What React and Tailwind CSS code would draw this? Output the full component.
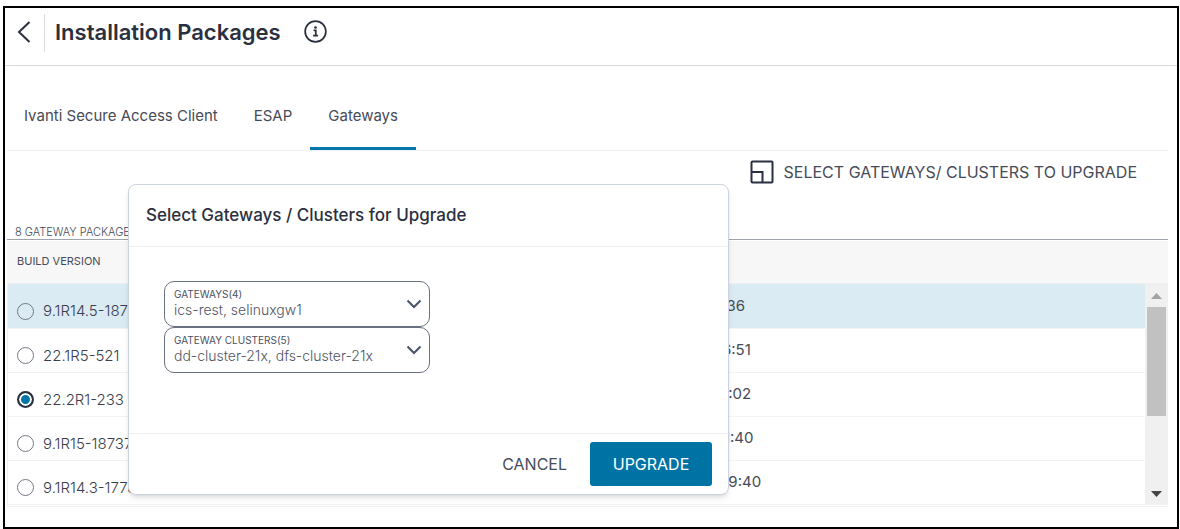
import { useState } from "react";

const tabs = ["Ivanti Secure Access Client", "ESAP", "Gateways"];

const packages = [
  { version: "9.1R14.5-18707", released: "11/04/2022, 10:11:36" },
  { version: "22.1R5-521", released: "09/06/2022, 11:26:51" },
  { version: "22.2R1-233", released: "08/11/2022, 21:43:02" },
  { version: "9.1R15-18737", released: "07/21/2022, 09:21:40" },
  { version: "9.1R14.3-17783", released: "06/20/2022, 08:29:40" },
];

const ScrollBar = () => (
  <div className="flex w-[23px] shrink-0 flex-col items-center bg-[#f0f0f0]">
    <svg viewBox="0 0 11 6" className="mt-[9px] h-[6px] w-[11px] shrink-0">
      <path d="M0 6 5.5 0 11 6z" fill="#a3a3a3" />
    </svg>
    <div className="mt-2 h-[109px] w-[19px] bg-[#c1c1c1]" />
    <svg viewBox="0 0 11 6" className="mt-auto mb-2 h-[6px] w-[11px] shrink-0">
      <path d="M0 0h11L5.5 6z" fill="#454545" />
    </svg>
  </div>
);

const SelectField = ({ id, label, value }) => (
  <div className="flex h-[46px] items-center rounded-[10px] border border-[#69707f] pr-[7px] pl-[9px]">
    <div className="flex min-w-0 flex-1 flex-col">
      <label htmlFor={id} className="text-[10px] leading-[12px] text-[#4b5162]">
        {label}
      </label>
      <select
        id={id}
        className="h-[20px] w-full appearance-none bg-transparent text-[14px] leading-[20px] font-light text-[#4f5563] outline-none"
      >
        <option>{value}</option>
      </select>
    </div>
    <svg
      viewBox="0 0 16 10"
      className="h-[10px] w-[16px] shrink-0"
      fill="none"
      stroke="#4a5468"
      strokeWidth="2"
    >
      <path d="M1.5 1.5 8 8l6.5-6.5" />
    </svg>
  </div>
);

const UpgradeDialog = () => (
  <div
    role="dialog"
    aria-labelledby="upgrade-title"
    className="absolute top-[176px] left-[123px] w-[601px] rounded-[8px] border border-[#ccd3e0] bg-white shadow-md"
  >
    <h2
      id="upgrade-title"
      className="border-b border-[#eeeff1] py-[18px] pl-[17px] text-[17px] leading-[25px] font-medium text-[#2b3040]"
    >
      Select Gateways / Clusters for Upgrade
    </h2>
    <div className="h-[186px] pt-[34px] pl-[35px]">
      <div className="w-[266px]">
        <SelectField
          id="gateways"
          label="GATEWAYS(4)"
          value="ics-rest, selinuxgw1"
        />
        <SelectField
          id="clusters"
          label="GATEWAY CLUSTERS(5)"
          value="dd-cluster-21x, dfs-cluster-21x"
        />
      </div>
    </div>
    <div className="flex justify-end gap-[23px] border-t border-[#eeeff1] py-2 pr-4">
      <button className="text-[16px] text-[#474c59]">CANCEL</button>
      <button className="h-[44px] w-[122px] rounded-[3px] bg-[#0073a5] text-[16px] text-white">
        UPGRADE
      </button>
    </div>
  </div>
);

export default function App() {
  const [activeTab, setActiveTab] = useState("Gateways");
  const [selected, setSelected] = useState("22.2R1-233");

  return (
    <div className="min-h-screen bg-white pt-[6px] pr-px pl-[3px] font-['Inter',sans-serif] text-[#474b57]">
      <div className="relative border-2 border-black">
        <header className="flex h-[58px] items-start border-b border-[#d5dbe1]">
          <button aria-label="Back" className="mt-[13px] ml-[12px]">
            <svg
              viewBox="0 0 14 22"
              className="h-[22px] w-[14px]"
              fill="none"
              stroke="#2b3040"
              strokeWidth="2"
            >
              <path d="M12.5 1 2 11l10.500 10" />
            </svg>
          </button>
          <div className="mt-[6px] ml-[13px] h-[38px] w-px bg-[#d9dce1]" />
          <h1 className="mt-[10px] ml-[10px] text-[22px] leading-[28px] font-semibold text-[#2b3040]">
            Installation Packages
          </h1>
          <button aria-label="Information" className="mt-[12px] ml-[23px]">
            <svg viewBox="0 0 24 24" className="h-[23px] w-[23px]" fill="none">
              <circle cx="12" cy="12" r="10.800" stroke="#2b3040" strokeWidth="1.800" />
              <circle cx="12" cy="7.800" r="1.400" fill="#2b3040" />
              <path
                d="M10 10.800h2.300V16M9.500 16.200h5.200"
                stroke="#2b3040"
                strokeWidth="1.800"
              />
            </svg>
          </button>
        </header>

        <div className="pr-[9px] pl-[2px]">
          <nav className="mt-[14px] flex h-[71px] border-b border-[#f0f0f2]">
            {tabs.map((tab) => (
              <button
                key={tab}
                onClick={() => setActiveTab(tab)}
                className={`border-b-3 px-[18px] pt-[5px] text-[15px] first:pl-[17px] ${
                  activeTab === tab ? "border-[#0077a8]" : "border-transparent"
                }`}
              >
                {tab}
              </button>
            ))}
          </nav>

          <div className="flex justify-end pt-[9px] pr-[31px]">
            <button className="flex items-center gap-[10px] text-[16px] leading-[24px]">
              <svg
                viewBox="0 0 24 24"
                className="h-[24px] w-[24px]"
                fill="none"
                stroke="#2b3040"
                strokeWidth="2"
              >
                <rect x="1.500" y="1.500" width="21" height="21" rx="1" />
                <path d="M1.500 12h11v10.500" />
              </svg>
              SELECT GATEWAYS/ CLUSTERS TO UPGRADE
            </button>
          </div>

          <p className="mt-[42px] border-b border-[#9fa3ad] pl-[8px] text-[11px] leading-[13px] font-light">
            8 GATEWAY PACKAGE(S)
          </p>

          <div className="mt-px flex h-[42px] items-center bg-[#f7f7f7] pb-px pl-[10px] text-[11px]">
            BUILD VERSION
          </div>

          <div className="flex border-t border-b border-l border-[#f0f0f2] pb-px">
            <table className="flex-1 border-collapse">
              <tbody>
                {packages.map((item, index) => (
                  <tr
                    key={item.version}
                    className={`h-[44px] border-b border-[#f3f3f4] ${
                      index === 0 ? "bg-[#daebf3]" : ""
                    }`}
                  >
                    <td className="w-1/2 pt-[11px] pl-[9px]">
                      <label className="flex items-center gap-[9px] text-[15px] leading-[20px] font-light text-[#3a3e4b]">
                        <input
                          type="radio"
                          name="package"
                          checked={selected === item.version}
                          onChange={() => setSelected(item.version)}
                          className="h-[17px] w-[17px] appearance-none rounded-full border border-[#737985] checked:border-2 checked:border-[#2b3040] checked:bg-[#0077a8] checked:shadow-[inset_0_0_0_2px_white]"
                        />
                        {item.version}
                      </label>
                    </td>
                    <td className="pl-[26px] text-[15px] leading-[20px]">
                      {item.released}
                    </td>
                  </tr>
                ))}
              </tbody>
            </table>
            <ScrollBar />
          </div>
        </div>
        <div className="h-[20px]" />

        <UpgradeDialog />
      </div>
    </div>
  );
}
